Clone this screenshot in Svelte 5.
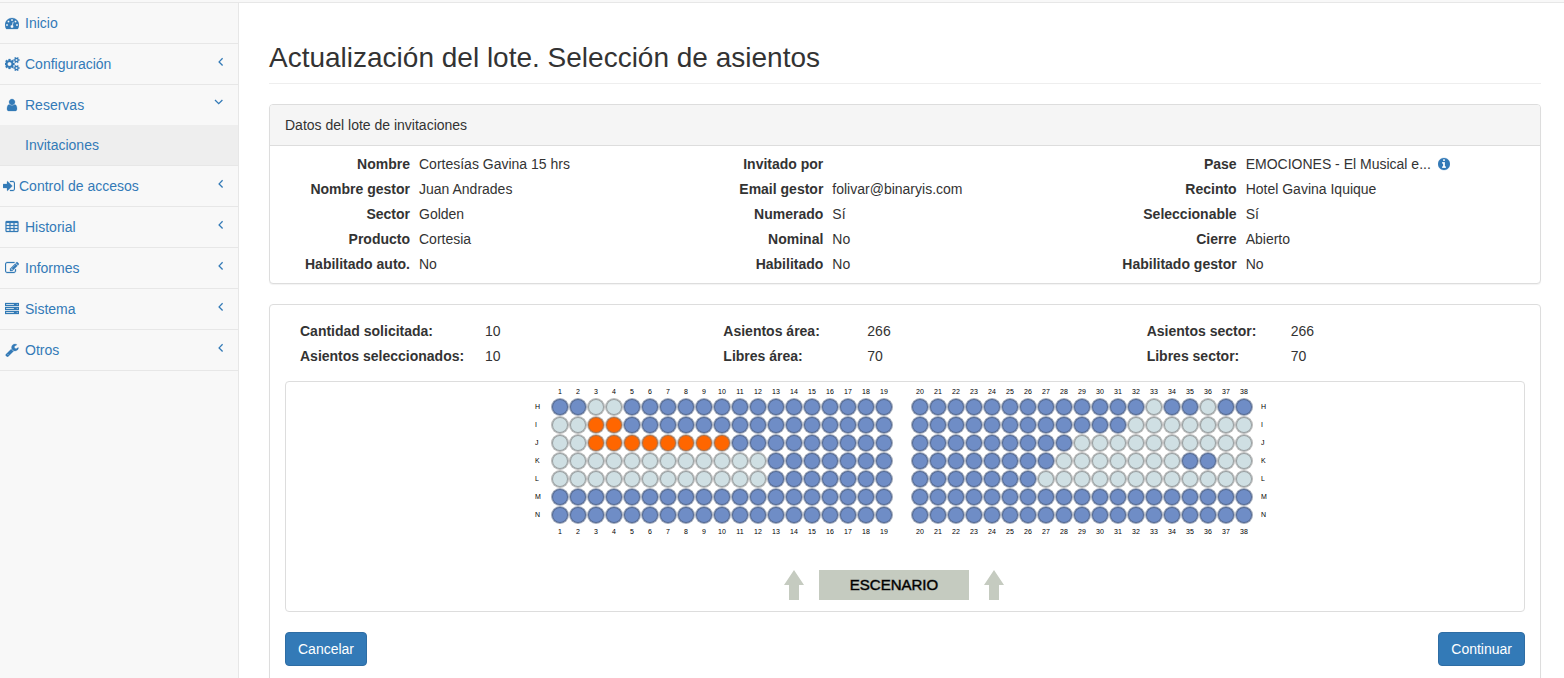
<script lang="ts">
  type SeatState = 'taken' | 'free' | 'selected';
  type Field = { label: string; value: string; info?: boolean };

  const ICONS = {
    dashboard: 'M384 1152q0-53-37.5-90.5t-90.5-37.5-90.5 37.5-37.5 90.5 37.5 90.5 90.5 37.5 90.5-37.5 37.5-90.5zm192-448q0-53-37.5-90.5t-90.5-37.5-90.5 37.5-37.5 90.5 37.5 90.5 90.5 37.5 90.5-37.5 37.5-90.5zm428 481l101-382q6-26-7.5-48.5t-38.5-29.5-48 6.5-30 39.5l-101 382q-60 5-107 43.5t-63 98.5q-20 77 20 146t117 89 146-20 89-117q16-60-6-117t-72-91zm660-33q0-53-37.5-90.5t-90.5-37.5-90.5 37.5-37.5 90.5 37.5 90.5 90.5 37.5 90.5-37.5 37.5-90.5zm-640-640q0-53-37.5-90.5t-90.5-37.5-90.5 37.5-37.5 90.5 37.5 90.5 90.5 37.5 90.5-37.5 37.5-90.5zm448 192q0-53-37.5-90.5t-90.5-37.5-90.5 37.5-37.5 90.5 37.5 90.5 90.5 37.5 90.5-37.5 37.5-90.5zm320 448q0 261-141 483-19 29-54 29h-1402q-35 0-54-29-141-221-141-483 0-182 71-348t191-286 286-191 348-71 348 71 286 191 191 286 71 348z',
    cogs: 'M832 896q0-106-75-181t-181-75-181 75-75 181 75 181 181 75 181-75 75-181zm768 512q0-52-38-90t-90-38-90 38-38 90q0 53 37.5 90.5t90.5 37.5 90.5-37.5 37.5-90.5zm0-1024q0-52-38-90t-90-38-90 38-38 90q0 53 37.5 90.5t90.5 37.5 90.5-37.5 37.5-90.5zm-384 421v185q0 10-7 19.5t-16 10.5l-155 24q-11 35-32 76 34 48 90 115 7 11 7 20 0 12-7 19-23 30-82.5 89.5t-78.5 59.5q-11 0-21-7l-115-90q-37 19-77 31-11 108-23 155-7 24-30 24h-186q-11 0-20-7.5t-10-17.5l-23-153q-34-10-75-31l-118 89q-7 7-20 7-11 0-21-8-144-133-144-160 0-9 7-19 10-14 41-53t47-61q-23-44-35-82l-152-24q-10-1-17-9.5t-7-19.5v-185q0-10 7-19.5t16-10.5l155-24q11-35 32-76-34-48-90-115-7-11-7-20 0-12 7-20 22-30 82-89t79-59q11 0 21 7l115 90q34-18 77-32 11-108 23-154 7-24 30-24h186q11 0 20 7.5t10 17.5l23 153q34 10 75 31l118-89q8-7 20-7 11 0 21 8 144 133 144 160 0 8-7 19-12 16-42 54t-45 60q23 48 34 82l152 23q10 2 17 10.5t7 19.5zm640 533v140q0 16-149 31-12 27-30 52 51 113 51 138 0 4-4 7-122 71-124 71-8 0-46-47t-52-68q-20 2-30 2t-30-2q-14 21-52 68t-46 47q-2 0-124-71-4-3-4-7 0-25 51-138-18-25-30-52-149-15-149-31v-140q0-16 149-31 13-29 30-52-51-113-51-138 0-4 4-7 4-2 35-20t59-34 30-16q8 0 46 46.5t52 67.5q20-2 30-2t30 2q51-71 92-112l6-2q4 0 124 70 4 3 4 7 0 25-51 138 17 23 30 52 149 15 149 31zm0-1024v140q0 16-149 31-12 27-30 52 51 113 51 138 0 4-4 7-122 71-124 71-8 0-46-47t-52-68q-20 2-30 2t-30-2q-14 21-52 68t-46 47q-2 0-124-71-4-3-4-7 0-25 51-138-18-25-30-52-149-15-149-31v-140q0-16 149-31 13-29 30-52-51-113-51-138 0-4 4-7 4-2 35-20t59-34 30-16q8 0 46 46.5t52 67.5q20-2 30-2t30 2q51-71 92-112l6-2q4 0 124 70 4 3 4 7 0 25-51 138 17 23 30 52 149 15 149 31z',
    user: 'M1536 1399q0 109-62.5 187t-150.5 78h-854q-88 0-150.5-78t-62.5-187q0-85 8.5-160.5t31.5-152 58.5-131 94-89 134.5-34.5q131 128 313 128t313-128q76 0 134.5 34.5t94 89 58.5 131 31.5 152 8.5 160.5zm-256-887q0 159-112.5 271.5t-271.5 112.5-271.5-112.5-112.5-271.5 112.5-271.5 271.5-112.5 271.5 112.5 112.5 271.5z',
    signIn: 'M1312 896q0 26-19 45l-544 544q-19 19-45 19t-45-19-19-45v-288h-448q-26 0-45-19t-19-45v-384q0-26 19-45t45-19h448v-288q0-26 19-45t45-19 45 19l544 544q19 19 19 45zm352-352v704q0 119-84.5 203.5t-203.5 84.5h-320q-13 0-22.5-9.5t-9.5-22.5q0-4-1-20t-.5-26.5 3-23.5 10-19.5 20.5-6.5h320q66 0 113-47t47-113v-704q0-66-47-113t-113-47h-312l-11.5-1-11.5-3-8-5.5-7-9-2-13.5q0-4-1-20t-.5-26.5 3-23.5 10-19.5 20.5-6.5h320q119 0 203.5 84.5t84.5 203.5z',
    table: 'M224 128h1344q66 0 113 47t47 113v1088q0 66-47 113t-113 47h-1344q-66 0-113-47t-47-113v-1088q0-66 47-113t113-47zM192 384v256h384v-256zM704 384v256h384v-256zM1216 384v256h384v-256zM192 768v256h384v-256zM704 768v256h384v-256zM1216 768v256h384v-256zM192 1152v256h384v-256zM704 1152v256h384v-256zM1216 1152v256h384v-256z',
    edit: 'M888 1184l116-116-152-152-116 116v56h96v96h56zm440-720q-16-16-33 1l-350 350q-17 17-1 33t33-1l350-350q17-17 1-33zm80 594v190q0 119-84.5 203.5t-203.5 84.5h-832q-119 0-203.5-84.5t-84.5-203.5v-832q0-119 84.5-203.5t203.5-84.5h832q63 0 117 25 15 7 18 23 3 17-9 29l-49 49q-14 14-32 8-23-6-45-6h-832q-66 0-113 47t-47 113v832q0 66 47 113t113 47h832q66 0 113-47t47-113v-126q0-13 9-22l64-64q15-15 35-7t20 29zm-96-738l288 288-672 672h-288v-288zm444 132l-92 92-288-288 92-92q28-28 68-28t68 28l152 152q28 28 28 68t-28 68z',
    server: 'M0 128h1792v384h-1792zM128 256v128h1024v-128zM1504 256v128h128v-128zM0 640h1792v384h-1792zM128 768v128h1024v-128zM1504 768v128h128v-128zM0 1152h1792v384h-1792zM128 1280v128h1024v-128zM1504 1280v128h128v-128z',
    wrench: 'M448 1472q0-26-19-45t-45-19-45 19-19 45 19 45 45 19 45-19 19-45zm644-420l-682 682q-37 37-90 37-52 0-91-37l-106-108q-38-36-38-90 0-53 38-91l681-681q39 98 114.5 173.5t173.5 114.5zm634-435q0 39-23 106-47 134-164.5 217.5t-258.5 83.5q-185 0-316.5-131.5t-131.5-316.5 131.5-316.5 316.5-131.5q58 0 121.5 16.5t107.5 46.5q16 11 16 28t-16 28l-293 169v224l193 107q5-3 79-48.5t135.5-81 70.5-35.5q15 0 23.5 10t8.5 25z',
    info: 'M1152 1376v-160q0-14-9-23t-23-9h-96v-512q0-14-9-23t-23-9h-320q-14 0-23 9t-9 23v160q0 14 9 23t23 9h96v320h-96q-14 0-23 9t-9 23v160q0 14 9 23t23 9h448q14 0 23-9t9-23zm-128-896v-160q0-14-9-23t-23-9h-192q-14 0-23 9t-9 23v160q0 14 9 23t23 9h192q14 0 23-9t9-23zm640 416q0 209-103 385.5t-279.5 279.5-385.5 103-385.5-103-279.5-279.5-103-385.5 103-385.5 279.5-279.5 385.5-103 385.5 103 279.5 279.5 103 385.5z',
  };

  const MENU: { label: string; icon: keyof typeof ICONS; arrow?: boolean; children?: string[] }[] = [
    { label: 'Inicio', icon: 'dashboard' },
    { label: 'Configuración', icon: 'cogs', arrow: true },
    { label: 'Reservas', icon: 'user', arrow: true, children: ['Invitaciones'] },
    { label: 'Control de accesos', icon: 'signIn', arrow: true },
    { label: 'Historial', icon: 'table', arrow: true },
    { label: 'Informes', icon: 'edit', arrow: true },
    { label: 'Sistema', icon: 'server', arrow: true },
    { label: 'Otros', icon: 'wrench', arrow: true },
  ];

  const BATCH: Field[][] = [
    [
      { label: 'Nombre', value: 'Cortesías Gavina 15 hrs' },
      { label: 'Nombre gestor', value: 'Juan Andrades' },
      { label: 'Sector', value: 'Golden' },
      { label: 'Producto', value: 'Cortesia' },
      { label: 'Habilitado auto.', value: 'No' },
    ],
    [
      { label: 'Invitado por', value: '' },
      { label: 'Email gestor', value: 'folivar@binaryis.com' },
      { label: 'Numerado', value: 'Sí' },
      { label: 'Nominal', value: 'No' },
      { label: 'Habilitado', value: 'No' },
    ],
    [
      { label: 'Pase', value: 'EMOCIONES - El Musical e...', info: true },
      { label: 'Recinto', value: 'Hotel Gavina Iquique' },
      { label: 'Seleccionable', value: 'Sí' },
      { label: 'Cierre', value: 'Abierto' },
      { label: 'Habilitado gestor', value: 'No' },
    ],
  ];

  // x = taken, o = free, s = selected; the space is the aisle
  const PLAN: Record<string, string> = {
    H: 'xxooxxxxxxxxxxxxxxx xxxxxxxxxxxxxoxxoxx',
    I: 'oossxxxxxxxxxxxxxxx xxxxxxxxxxxxooooooo',
    J: 'oossssssssxxxxxxxxx xxxxxxxxxoooooooooo',
    K: 'ooooooooooooxxxxxxx xxxxxxxxoooooooxxoo',
    L: 'ooooooooooooxxxxxxx xxxxxxxoooooooooooo',
    M: 'xxxxxxxxxxxxxxxxxxx xxxxxxxxxxxxxxxxxxx',
    N: 'xxxxxxxxxxxxxxxxxxx xxxxxxxxxxxxxxxxxxx',
  };
  const STATES: Record<string, SeatState> = { x: 'taken', o: 'free', s: 'selected' };
  const AISLE = 19;
  const REQUESTED = 10;

  const columns = Array.from({ length: 39 }, (_, i) => (i === AISLE ? 0 : i < AISLE ? i + 1 : i));

  let rows = $state(
    Object.entries(PLAN).map(([name, seats]) => ({
      name,
      seats: [...seats].map((c) => STATES[c] ?? null),
    }))
  );
  let selectedCount = $derived(rows.flatMap((r) => r.seats).filter((s) => s === 'selected').length);

  let stats = $derived([
    [
      { label: 'Cantidad solicitada:', value: REQUESTED },
      { label: 'Asientos seleccionados:', value: selectedCount },
    ],
    [
      { label: 'Asientos área:', value: 266 },
      { label: 'Libres área:', value: 70 },
    ],
    [
      { label: 'Asientos sector:', value: 266 },
      { label: 'Libres sector:', value: 70 },
    ],
  ]);

  function toggleSeat(r: number, c: number) {
    const seat = rows[r].seats[c];
    if (seat === 'selected') rows[r].seats[c] = 'free';
    else if (seat === 'free' && selectedCount < REQUESTED) rows[r].seats[c] = 'selected';
  }
</script>

{#snippet icon(name: keyof typeof ICONS)}
  {#if name === 'cogs'}
    <svg class="icon" width="15" height="14" viewBox="0 0 1920 1792" aria-hidden="true"><path d={ICONS[name]} /></svg>
  {:else if name === 'signIn' || name === 'info'}
    <svg class="icon" width="12" height="14" viewBox="128 0 1536 1792" aria-hidden="true"><path d={ICONS[name]} /></svg>
  {:else}
    <svg class="icon" width="14" height="14" viewBox="0 0 1792 1792" aria-hidden="true"><path d={ICONS[name]} /></svg>
  {/if}
{/snippet}

{#snippet numbers(position: string)}
  <div class="seat-row numbers {position}">
    <span class="row-label"></span>
    {#each columns as n}
      <span class="number">{n || ''}</span>
    {/each}
  </div>
{/snippet}

{#snippet stageArrow()}
  <svg width="20" height="30" viewBox="0 0 20 30" aria-hidden="true">
    <path d="M10 0L20 15H15V30H5V15H0Z" fill="#c5cbc0" />
  </svg>
{/snippet}

<div class="page">
  <header class="topbar"></header>
  <div class="layout">
    <nav class="sidebar">
      <ul>
        {#each MENU as item}
          <li>
            <a href="#menu">
              <span class="icon-box" class:fixed={item.icon !== 'signIn'}>{@render icon(item.icon)}</span>
              <span>{item.label}</span>
              {#if item.arrow}
                <svg class="arrow" width="10" height="10" viewBox="0 0 10 10" aria-hidden="true">
                  <path d={item.children ? 'M1 2L4.7 5.7L8.4 2' : 'M8.6 1.2L5.1 4.9L8.6 8.5'} />
                </svg>
              {/if}
            </a>
            {#if item.children}
              <ul class="submenu">
                {#each item.children as child}
                  <li><a href="#menu" class="active">{child}</a></li>
                {/each}
              </ul>
            {/if}
          </li>
        {/each}
      </ul>
    </nav>

    <main class="content">
      <h1>Actualización del lote. Selección de asientos</h1>

      <section class="panel">
        <div class="panel-heading">Datos del lote de invitaciones</div>
        <div class="batch">
          {#each BATCH as column}
            <dl>
              {#each column as field}
                <dt>{field.label}</dt>
                <dd>
                  {field.value}
                  {#if field.info}
                    <button class="info" aria-label="Información del pase">{@render icon('info')}</button>
                  {/if}
                </dd>
              {/each}
            </dl>
          {/each}
        </div>
      </section>

      <section class="panel">
        <div class="stats">
          {#each stats as column, i}
            <dl class:wide={i === 0}>
              {#each column as stat}
                <dt>{stat.label}</dt>
                <dd>{stat.value}</dd>
              {/each}
            </dl>
          {/each}
        </div>

        <div class="map">
          <div class="plan">
            {@render numbers('top')}
            {#each rows as row, r}
              <div class="seat-row">
                <span class="row-label">{row.name}</span>
                {#each row.seats as seat, c}
                  {#if seat}
                    <button
                      class="seat {seat}"
                      aria-label="Fila {row.name}, asiento {columns[c]}"
                      disabled={seat === 'taken'}
                      onclick={() => toggleSeat(r, c)}
                    ></button>
                  {:else}
                    <span></span>
                  {/if}
                {/each}
                <span class="row-label end">{row.name}</span>
              </div>
            {/each}
            {@render numbers('bottom')}
            <div class="stage-row">
              {@render stageArrow()}
              <div class="stage">ESCENARIO</div>
              {@render stageArrow()}
            </div>
          </div>
        </div>

        <div class="actions">
          <button class="btn">Cancelar</button>
          <button class="btn">Continuar</button>
        </div>
      </section>
    </main>
  </div>
</div>

<style>
  :global(body) { background: #fff; }
  .page {
    display: flex;
    flex-direction: column;
    min-height: 100vh;
    font-family: "Liberation Sans", Arial, sans-serif;
    font-size: 14px;
    line-height: 20px;
    color: #333;
  }
  .page * { box-sizing: border-box; }
  .topbar {
    height: 3px;
    background: #f8f8f8;
    border-bottom: 1px solid #e7e7e7;
  }
  .layout { display: flex; flex: 1; }

  .sidebar {
    flex: 0 0 239px;
    background: #f8f8f8;
    border-right: 1px solid #e7e7e7;
  }
  .sidebar ul { margin: 0; padding: 0; list-style: none; }
  .sidebar li { border-bottom: 1px solid #e7e7e7; }
  .sidebar .submenu li { border-bottom: 0; }
  .sidebar a {
    display: flex;
    align-items: center;
    gap: 4px;
    padding: 10px 14px 10px 3px;
    color: #337ab7;
    text-decoration: none;
  }
  .sidebar a:hover, .sidebar a.active { background: #eee; }
  .sidebar .submenu a { padding-left: 25px; }
  .icon {
    display: block;
    fill: currentColor;
    stroke: currentColor;
    stroke-width: 32;
  }
  .icon-box { display: flex; justify-content: center; }
  .icon-box.fixed { width: 18px; }
  .icon, .arrow { flex: none; }
  .icon { fill-rule: evenodd; }
  .arrow {
    margin-left: auto;
    margin-bottom: 4px;
    fill: none;
    stroke: currentColor;
    stroke-width: 1.3;
  }

  .content { flex: 1; min-width: 0; padding: 0 23px 0 30px; }
  h1 {
    margin: 38px 0 20px;
    padding-bottom: 9px;
    border-bottom: 1px solid #eee;
    font-size: 28px;
    line-height: 33px;
    font-weight: 400;
  }
  .panel {
    margin-bottom: 20px;
    border: 1px solid #ddd;
    border-radius: 4px;
    background: #fff;
    box-shadow: 0 1px 1px rgba(0, 0, 0, 0.05);
  }
  .panel-heading {
    padding: 10px 15px;
    border-bottom: 1px solid #ddd;
    border-radius: 3px 3px 0 0;
    background: #f5f5f5;
  }

  dl { display: grid; margin: 0; line-height: 25px; }
  dt { font-weight: 700; }
  dd { margin: 0; }
  .batch {
    display: grid;
    grid-template-columns: repeat(3, 1fr);
    padding: 6px 15px;
  }
  .batch dl { grid-template-columns: 125px 1fr; column-gap: 9px; }
  .batch dt { text-align: right; }
  .batch dd { display: flex; align-items: center; gap: 7px; }
  .info {
    padding: 0 0 2px;
    border: 0;
    background: none;
    color: #337ab7;
    cursor: pointer;
  }

  .stats {
    display: grid;
    grid-template-columns: repeat(3, 1fr);
    padding: 14px 0 12px;
  }
  .stats dl { grid-template-columns: 114px 1fr; column-gap: 30px; padding-left: 30px; }
  .stats dl.wide { grid-template-columns: 165px 1fr; column-gap: 20px; }

  .map {
    display: flex;
    justify-content: center;
    margin: 0 15px;
    padding-bottom: 11px;
    border: 1px solid #ddd;
    border-radius: 4px;
  }
  .plan { width: 740px; }
  .seat-row {
    display: grid;
    grid-template-columns: 16px repeat(39, 18px) 22px;
    height: 18px;
    font-size: 7px;
    line-height: 18px;
    color: #000;
  }
  .numbers { height: 16px; line-height: 16px; text-align: center; }
  .numbers.top { line-height: 20px; }
  .row-label.end { padding-left: 8px; }
  .seat {
    width: 18px;
    height: 18px;
    padding: 0;
    border: 1px solid rgba(120, 120, 120, 0.5);
    border-radius: 50%;
    background-clip: padding-box;
    box-shadow: inset 0 0 0 1px rgba(120, 120, 120, 0.6);
    cursor: pointer;
  }
  .seat.taken {
    background-color: #6f8dc6;
    border-color: rgba(70, 85, 115, 0.5);
    box-shadow: inset 0 0 0 1px rgba(70, 85, 115, 0.6);
    cursor: default;
  }
  .seat.free { background-color: #cfdfe3; }
  .seat.selected { background-color: #f60; }
  .stage-row {
    display: flex;
    justify-content: center;
    gap: 15px;
    margin-top: 30px;
    padding-right: 22px;
  }
  .stage {
    width: 150px;
    background: #c5cbc0;
    color: #000;
    font-size: 15px;
    line-height: 30px;
    text-align: center;
    -webkit-text-stroke: 1px rgba(0, 0, 0, 0.45);
  }

  .actions {
    display: flex;
    justify-content: space-between;
    padding: 20px 15px 15px;
  }
  .btn {
    padding: 6px 12px;
    border: 1px solid #2e6da4;
    border-radius: 4px;
    background: #337ab7;
    color: #fff;
    font: inherit;
    cursor: pointer;
  }
  .btn:hover { background: #286090; }
</style>
